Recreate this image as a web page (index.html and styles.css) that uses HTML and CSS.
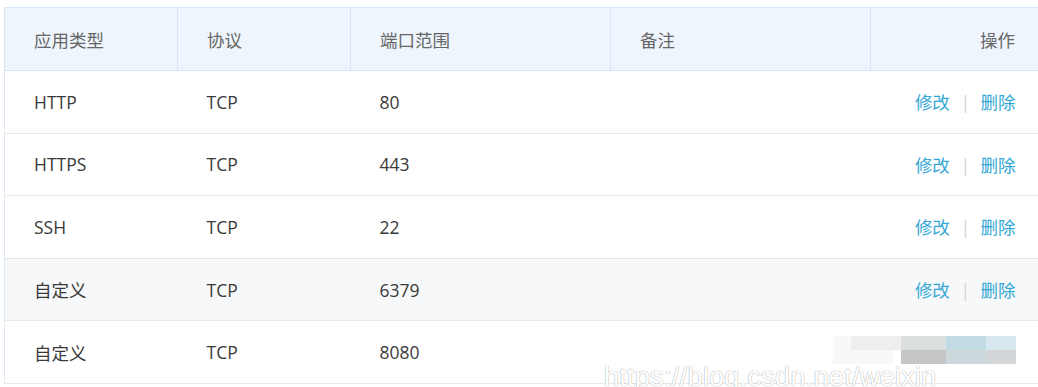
FILE: index.html
```html
<!DOCTYPE html>
<html lang="zh-CN">
<head>
<meta charset="utf-8">
<title>端口规则</title>
<link rel="stylesheet" href="styles.css">
</head>
<body>
<div class="page">
  <table class="rules">
    <colgroup>
      <col class="c1"><col class="c2"><col class="c3"><col class="c4"><col class="c5">
    </colgroup>
    <thead>
      <tr>
        <th>应用类型</th>
        <th>协议</th>
        <th>端口范围</th>
        <th>备注</th>
        <th class="op">操作</th>
      </tr>
    </thead>
    <tbody>
      <tr>
        <td>HTTP</td><td>TCP</td><td>80</td><td></td>
        <td class="op"><a class="link">修改</a><span class="sep">|</span><a class="link">删除</a></td>
      </tr>
      <tr>
        <td>HTTPS</td><td>TCP</td><td>443</td><td></td>
        <td class="op"><a class="link">修改</a><span class="sep">|</span><a class="link">删除</a></td>
      </tr>
      <tr>
        <td>SSH</td><td>TCP</td><td>22</td><td></td>
        <td class="op"><a class="link">修改</a><span class="sep">|</span><a class="link">删除</a></td>
      </tr>
      <tr class="hover">
        <td>自定义</td><td>TCP</td><td>6379</td><td></td>
        <td class="op"><a class="link">修改</a><span class="sep">|</span><a class="link">删除</a></td>
      </tr>
      <tr>
        <td>自定义</td><td>TCP</td><td>8080</td><td></td>
        <td class="op"></td>
      </tr>
    </tbody>
  </table>
  <div class="watermark">
    <div class="mosaic">
      <span class="m0"></span><span class="m1"></span><span class="m2"></span><span class="m3"></span><span class="m4"></span><span class="m5"></span><span class="m6"></span><span class="m7"></span>
    </div>
    <span class="wm-text">https://blog.csdn.net/weixin_</span>
  </div>
</div>
</body>
</html>
```

FILE: styles.css
```css
html, body {
  margin: 0;
  padding: 0;
  background: #ffffff;
}

body {
  font-family: "Open Sans", "Noto Sans CJK SC", sans-serif;
  font-size: 17.5px;
  color: #333333;
  overflow: hidden;
}

.page {
  position: relative;
  width: 1038px;
  height: 387px;
  padding: 7px 0 0 4px;
  box-sizing: border-box;
}

.rules {
  border-collapse: collapse;
  table-layout: fixed;
  width: 1040px;
  border-left: 1px solid #dce9f6;
}

.c1 { width: 173px; }
.c2 { width: 173px; }
.c3 { width: 260px; }
.c4 { width: 260px; }
.c5 { width: 174px; }

.rules th {
  height: 62px;
  background: #eef5fd;
  border: 1px solid #d6e6f7;
  font-weight: normal;
  color: #666666;
  text-align: left;
  padding: 0 0 0 29px;
}

.rules td {
  height: 61.6px;
  border-bottom: 1px solid #e6e8ea;
  padding: 0 0 0 29px;
  color: #3a3a3a;
}

.rules tr.hover td {
  background: #f7f8f9;
}

.rules .op {
  text-align: right;
  padding: 0 29px 0 0;
}

.link {
  color: #35a8d6;
  cursor: pointer;
}

.sep {
  color: #d2d4d6;
  margin: 0 10.5px;
}

.watermark {
  position: absolute;
  right: 0;
  bottom: 0;
  width: 440px;
  height: 60px;
  overflow: hidden;
}

.wm-text {
  position: absolute;
  left: 6px;
  bottom: -6px;
  font-family: "Liberation Sans", sans-serif;
  font-size: 27px;
  letter-spacing: 0.3px;
  color: #ffffff;
  white-space: nowrap;
  text-shadow: 0 0 1px #b0b0b0, 0 0 1px #b0b0b0;
}

.mosaic {
  position: absolute;
  left: 235px;
  top: 9px;
  width: 200px;
  height: 28px;
}

.mosaic span {
  position: absolute;
  height: 14px;
}

.m0 { left: 0; top: 0; width: 60px; height: 28px !important; background: #f8f8f8; }
.m1 { left: 18px; top: 0; width: 50px; background: #eeeeee; }
.m2 { left: 68px; top: 0; width: 55px; background: #dcdfe0; }
.m3 { left: 68px; top: 14px; width: 45px; background: #c4c6c8; }
.m4 { left: 113px; top: 0; width: 40px; background: #c3dbe4; }
.m5 { left: 113px; top: 14px; width: 40px; background: #cdd8dc; }
.m6 { left: 153px; top: 0; width: 30px; background: #d6e7ee; }
.m7 { left: 153px; top: 14px; width: 30px; background: #d4d7d9; }
```
